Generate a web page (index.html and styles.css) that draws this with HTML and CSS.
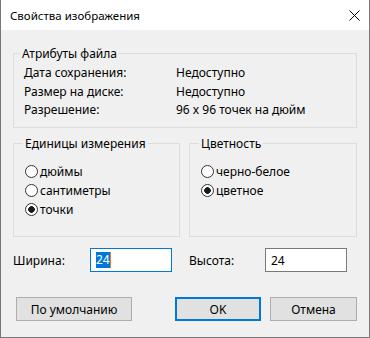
FILE: index.html
```html
<!DOCTYPE html>
<html lang="ru">
<head>
<meta charset="utf-8">
<title>Свойства изображения</title>
<link rel="stylesheet" href="styles.css">
</head>
<body>
<div class="window">
  <div class="titlebar">
    <span class="title">Свойства изображения</span>
    <svg class="close" width="11" height="11" viewBox="0 0 11 11"><path d="M0.5 0.5L10.5 10.5M10.5 0.5L0.5 10.5" stroke="#000" stroke-width="1" fill="none"/></svg>
  </div>
  <div class="content">
    <fieldset class="group attrs">
      <legend>Атрибуты файла</legend>
      <div class="attr-grid">
        <span>Дата сохранения:</span><span>Недоступно</span>
        <span>Размер на диске:</span><span>Недоступно</span>
        <span>Разрешение:</span><span>96 x 96 точек на дюйм</span>
      </div>
    </fieldset>
    <div class="groups-row">
      <fieldset class="group radios">
        <legend>Единицы измерения</legend>
        <label class="radio"><input type="radio" name="units"><span>дюймы</span></label>
        <label class="radio"><input type="radio" name="units"><span>сантиметры</span></label>
        <label class="radio"><input type="radio" name="units" checked><span>точки</span></label>
      </fieldset>
      <fieldset class="group radios">
        <legend>Цветность</legend>
        <label class="radio"><input type="radio" name="color"><span>черно-белое</span></label>
        <label class="radio"><input type="radio" name="color" checked><span>цветное</span></label>
      </fieldset>
    </div>
    <div class="size-row">
      <span class="size-label">Ширина:</span>
      <div class="textbox focused"><span class="selection">24</span><span class="caret"></span></div>
      <span class="size-label second">Высота:</span>
      <div class="textbox">24</div>
    </div>
    <div class="buttons">
      <button class="btn btn-default-size">По умолчанию</button>
      <span class="spacer"></span>
      <button class="btn btn-ok">OK</button>
      <button class="btn btn-cancel">Отмена</button>
    </div>
  </div>
</div>
</body>
</html>
```

FILE: styles.css
```css
* { box-sizing: border-box; }
html, body { margin: 0; padding: 0; background: #fff; }
body {
  font-family: "Noto Sans", "Open Sans", sans-serif;
  font-size: 12px;
  color: #000;
}
.window {
  width: 370px;
  height: 338px;
  border: 1px solid #777;
  border-top: none;
  display: flex;
  flex-direction: column;
  background: #f0f0f0;
}
.titlebar {
  height: 30px;
  flex: none;
  background: #fff;
  display: flex;
  align-items: center;
  justify-content: space-between;
  padding: 1px 9px 0 9px;
}
.title { font-size: 11.5px; }
.close { display: block; margin-top: -1px; }
.content {
  flex: 1;
  padding: 16px 12px 0 12px;
  display: flex;
  flex-direction: column;
}
.group {
  margin: 0;
  border: 1px solid #dcdcdc;
  min-width: 0;
  padding: 0 0 0 8px;
}
.group legend {
  padding: 0 2px;
  margin-left: -2px;
  line-height: 15px;
  height: 15px;
}
.attrs { padding-top: 3px; padding-bottom: 7.5px; }
.attr-grid {
  display: grid;
  grid-template-columns: 152px 1fr;
  padding-left: 2px;
  line-height: 18.5px;
}
.groups-row {
  margin-top: 8px;
  display: grid;
  grid-template-columns: 167px 1fr;
  column-gap: 9px;
}
.radios {
  padding-top: 11px;
  padding-bottom: 17px;
  padding-left: 11px;
  display: flex;
  flex-direction: column;
}
.radio {
  display: flex;
  align-items: center;
  height: 19px;
}
.radio input {
  appearance: none;
  -webkit-appearance: none;
  margin: 0 2px 0 0;
  width: 13px;
  height: 13px;
  border: 1px solid #333;
  border-radius: 50%;
  background: #fff;
  flex: none;
}
.radio input:checked {
  background: radial-gradient(circle, #1a1a1a 0 3px, #fff 3.6px);
}
.size-row {
  margin-top: 11px;
  display: flex;
  align-items: center;
  height: 24px;
}
.size-label { width: 77px; }
.size-label.second { margin-left: 17px; width: 76px; }
.textbox {
  width: 82px;
  height: 24px;
  border: 1px solid #7a7a7a;
  background: #fff;
  display: flex;
  align-items: center;
  padding-left: 5px;
}
.textbox.focused { border-color: #0078d7; }
.selection {
  background: #0078d7;
  color: #fff;
  line-height: 16px;
  height: 16px;
}
.caret {
  width: 1px;
  height: 16px;
  background: #f07c1c;
}
.buttons {
  margin-top: 25px;
  display: flex;
  align-items: center;
}
.btn {
  font-family: inherit;
  font-size: 12px;
  color: #000;
  height: 24px;
  background: #e1e1e1;
  border: 1px solid #adadad;
  border-radius: 0;
  padding: 0;
}
.btn-default-size { width: 116px; margin-left: 3px; }
.spacer { flex: 1; }
.btn-ok { width: 86px; border: 2px solid #0078d7; }
.btn-cancel { width: 87px; margin-left: 9px; }
```
